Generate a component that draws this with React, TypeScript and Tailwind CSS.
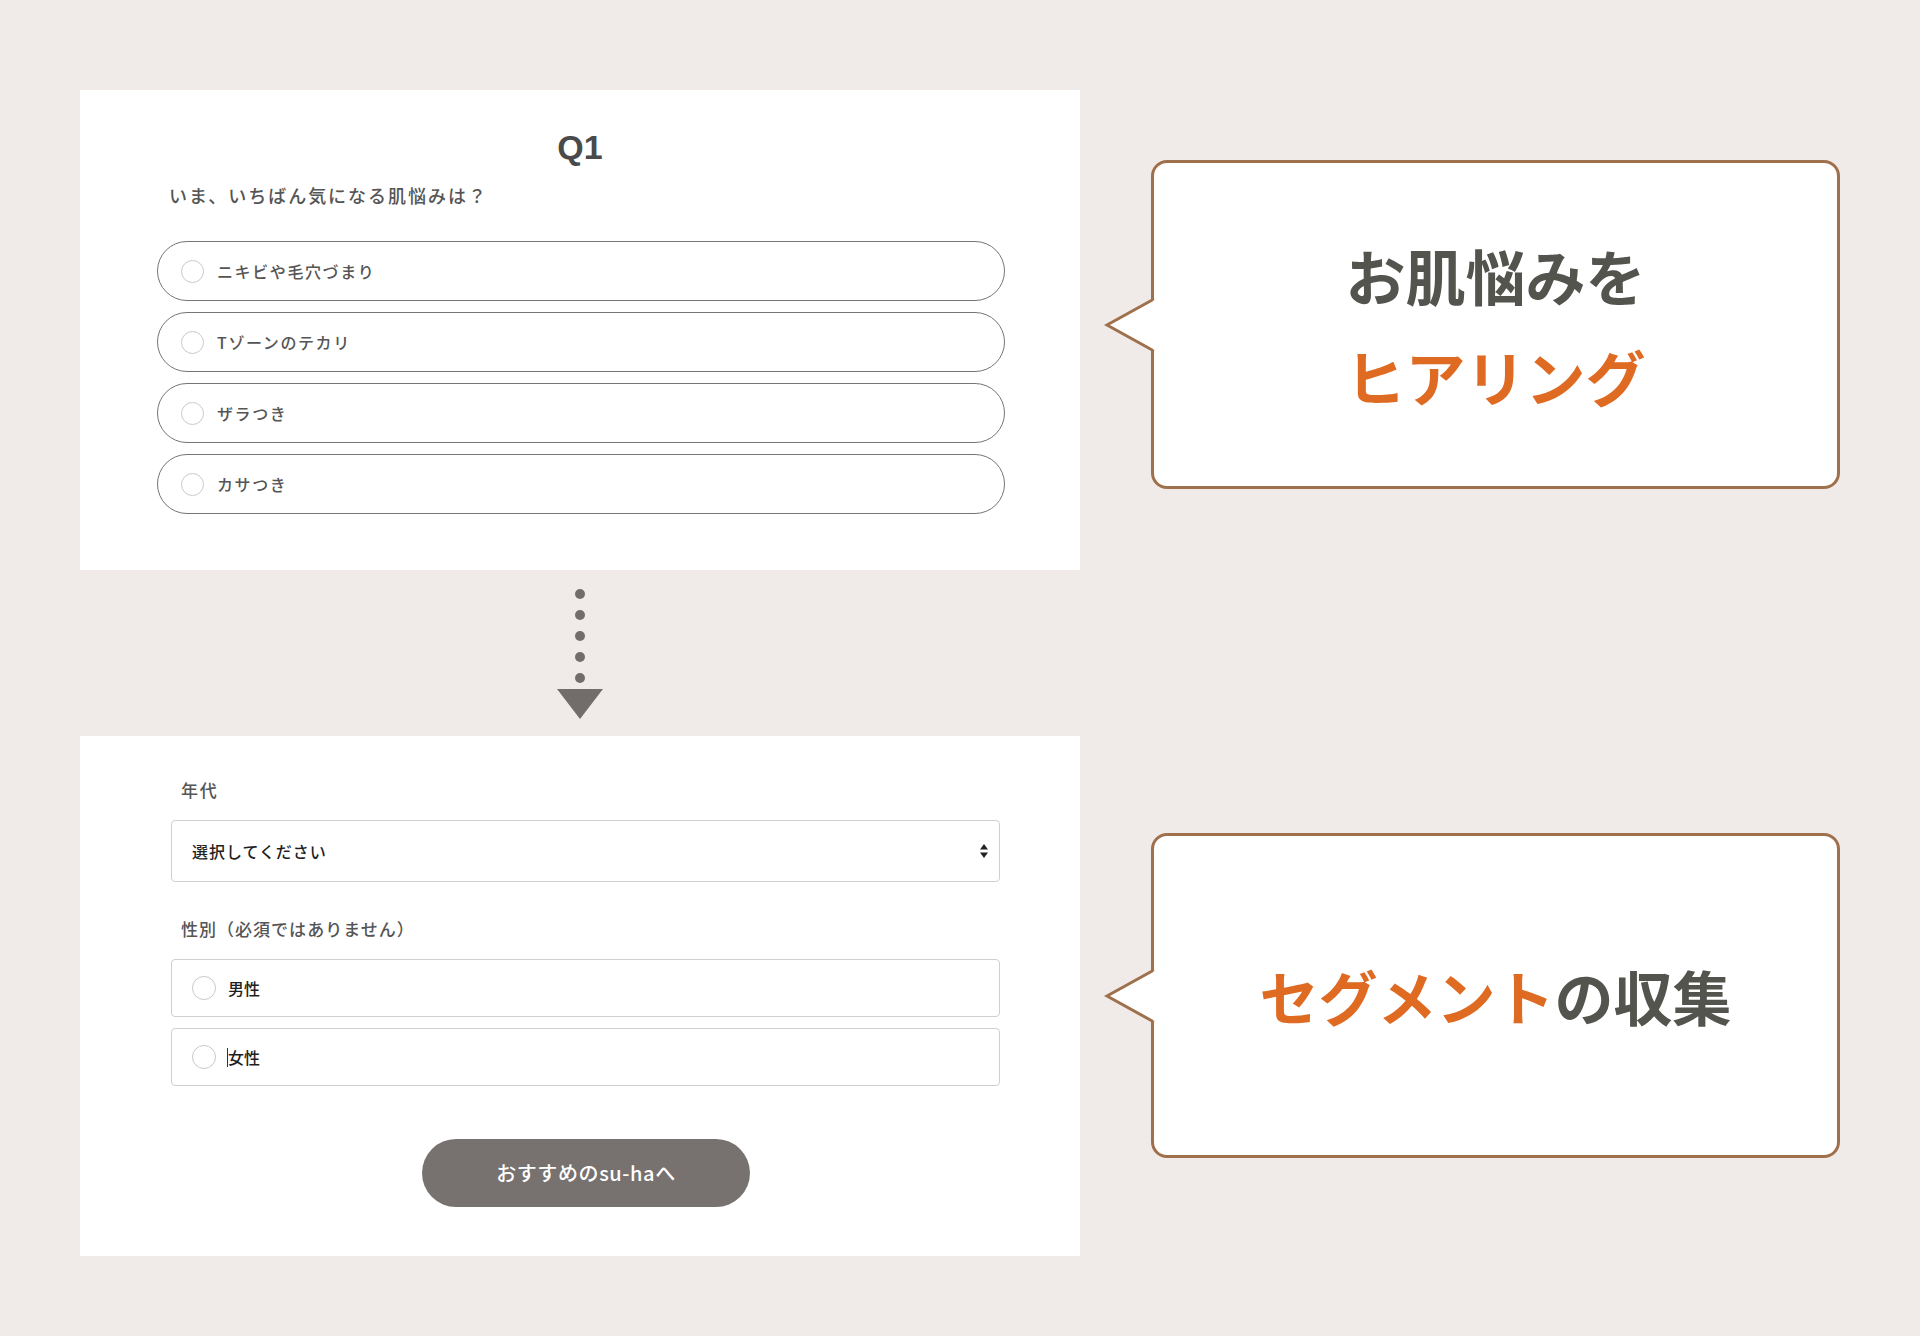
import React from "react";

const JP = "font-['Noto_Sans_CJK_JP','Noto_Sans',sans-serif]";

function Radio({ size = 23 }: { size?: number }) {
  return (
    <span
      className="shrink-0 rounded-full border border-[#c9c9c9] bg-white"
      style={{ width: size, height: size }}
    />
  );
}

function Bubble({ children, className }: { children: React.ReactNode; className: string }) {
  return (
    <div className={`relative w-[689px] rounded-[16px] border-[3px] border-[#9f704c] bg-white ${className}`}>
      <svg
        className="absolute left-[-50px] top-1/2 -translate-y-1/2"
        width="53"
        height="58"
        viewBox="0 0 53 58"
      >
        <path d="M50 3 L3 29 L50 55 Z" fill="#ffffff" stroke="none" />
        <path d="M50 3 L3 29 L50 55" fill="none" stroke="#9f704c" strokeWidth="3" strokeLinejoin="miter" />
        <rect x="49" y="4.5" width="4" height="49" fill="#ffffff" />
      </svg>
      <div className="flex h-full w-full flex-col items-center justify-center">{children}</div>
    </div>
  );
}

export default function App() {
  const options = ["ニキビや毛穴づまり", "Tゾーンのテカリ", "ザラつき", "カサつき"];
  return (
    <div className={`min-h-[1336px] w-full bg-[#f0ebe8] pl-[80px] pt-[90px] ${JP}`}>
      {/* Row 1 */}
      <div className="flex items-start">
        <div className="flex h-[480px] w-[1000px] flex-col bg-white pt-[40px]">
          <div className="text-center font-['Liberation_Sans',Arial,sans-serif] text-[34px] font-bold leading-[34px] text-[#4a4a4a]">
            Q1
          </div>
          <div className="mt-[18px] pl-[89px] text-[18px] font-medium leading-[26px] tracking-[0.11em] text-[#555555]">
            いま、いちばん気になる肌悩みは？
          </div>
          <div className="ml-[77px] mt-[33px] flex w-[848px] flex-col gap-[11px]">
            {options.map((o) => (
              <div
                key={o}
                className="flex h-[60px] items-center gap-[13px] rounded-full border-[1.5px] border-[#757575] pl-[23px]"
              >
                <Radio />
                <span className="text-[16px] font-medium tracking-[0.1em] text-[#555555]">{o}</span>
              </div>
            ))}
          </div>
        </div>
        <Bubble className="ml-[71px] mt-[70px] h-[329px]">
          <div className="text-[60px] font-bold leading-[101px] text-[#54544e]">お肌悩みを</div>
          <div className="text-[60px] font-bold leading-[101px] text-[#df6a22]">ヒアリング</div>
        </Bubble>
      </div>

      {/* Arrow */}
      <div className="flex h-[166px] w-[1000px] flex-col items-center pt-[19px]">
        <div className="flex flex-col items-center gap-[11px]">
          {[0, 1, 2, 3, 4].map((i) => (
            <span key={i} className="h-[10px] w-[10px] rounded-full bg-[#726d6b]" />
          ))}
        </div>
        <svg className="mt-[6px]" width="46" height="30" viewBox="0 0 46 30">
          <polygon points="0,0 46,0 23,30" fill="#726d6b" />
        </svg>
      </div>

      {/* Row 2 */}
      <div className="flex items-start">
        <div className="flex h-[520px] w-[1000px] flex-col bg-white pt-[42px]">
          <div className="pl-[101px] text-[17px] font-medium leading-[24px] tracking-[0.1em] text-[#555555]">年代</div>
          <div className="ml-[91px] mt-[18px] flex h-[62px] w-[829px] items-center justify-between rounded-[4px] border border-[#cfcfcf] pl-[20px] pr-[11px]">
            <span className="text-[16px] font-medium tracking-[0.06em] text-[#1f1f1f]">選択してください</span>
            <svg width="8" height="16" viewBox="0 0 8 16">
              <polygon points="4,1 8,6.5 0,6.5" fill="#222222" />
              <polygon points="0,9.5 8,9.5 4,15" fill="#222222" />
            </svg>
          </div>
          <div className="mt-[35px] pl-[101px] text-[17px] font-medium leading-[24px] tracking-[0.06em] text-[#555555]">
            性別（必須ではありません）
          </div>
          <div className="ml-[91px] mt-[18px] flex w-[829px] flex-col gap-[11px]">
            {["男性", "女性"].map((g, i) => (
              <div
                key={g}
                className="flex h-[58px] items-center gap-[12px] rounded-[4px] border border-[#cfcfcf] pl-[20px]"
              >
                <Radio size={24} />
                <span className="relative text-[16px] font-medium text-[#1f1f1f]">
                  {i === 1 && <span className="absolute left-[-1px] top-[3px] h-[19px] w-[1px] bg-[#333]" />}
                  {g}
                </span>
              </div>
            ))}
          </div>
          <div className="ml-[342px] mt-[53px] flex h-[68px] w-[328px] items-center justify-center rounded-full bg-[#77716f] text-[20px] font-medium tracking-[0.03em] text-white">
            おすすめのsu-haへ
          </div>
        </div>
        <Bubble className="ml-[71px] mt-[97px] h-[325px]">
          <div className="text-[59px] font-bold leading-[80px]">
            <span className="text-[#df6a22]">セグメント</span>
            <span className="text-[#54544e]">の収集</span>
          </div>
        </Bubble>
      </div>
    </div>
  );
}
